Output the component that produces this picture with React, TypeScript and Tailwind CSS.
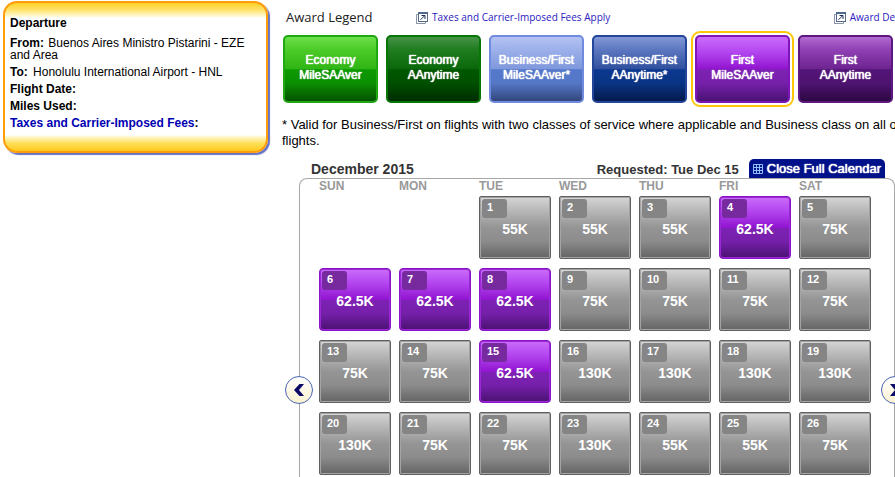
import { clsx } from "clsx";

const WEEKDAYS = ["SUN", "MON", "TUE", "WED", "THU", "FRI", "SAT"];

const LEGEND = [
  {
    cabin: "Economy",
    award: "MileSAAver",
    style:
      "border-[#20a814] bg-[linear-gradient(#6be04a,#4ccb28_20%,#2fb515_50%,#0d9a03_51%,#0b8f02_72%,#045200)]",
  },
  {
    cabin: "Economy",
    award: "AAnytime",
    style:
      "border-[#067606] bg-[linear-gradient(#479447,#1f7c1f_20%,#0a680a_50%,#005800_51%,#005000_72%,#002c00)]",
  },
  {
    cabin: "Business/First",
    award: "MileSAAver*",
    style:
      "border-[#708ade] bg-[linear-gradient(#b4c3f2,#9cb0ea_20%,#7f98dc_50%,#5478cc_51%,#5577c6_72%,#33467c)]",
  },
  {
    cabin: "Business/First",
    award: "AAnytime*",
    style:
      "border-[#24469a] bg-[linear-gradient(#8297d6,#5c77c0_20%,#2f4f9e_50%,#0b3890_51%,#0a3484_72%,#041a4c)]",
  },
  {
    cabin: "First",
    award: "MileSAAver",
    selected: true,
    style:
      "border-[#7d15b8] bg-[linear-gradient(#cb6cfb,#b143ee_25%,#9114cf_50%,#7d22b4_51%,#7620aa_72%,#4a1273)]",
  },
  {
    cabin: "First",
    award: "AAnytime",
    style:
      "border-[#5c1880] bg-[linear-gradient(#b26ad2,#9040b4_20%,#6c2490_50%,#541578_51%,#4e1370_72%,#2c0842)]",
  },
];

type Day = { day: number; miles: string; saver?: boolean };

const WEEKS: (Day | null)[][] = [
  [
    null,
    null,
    { day: 1, miles: "55K" },
    { day: 2, miles: "55K" },
    { day: 3, miles: "55K" },
    { day: 4, miles: "62.5K", saver: true },
    { day: 5, miles: "75K" },
  ],
  [
    { day: 6, miles: "62.5K", saver: true },
    { day: 7, miles: "62.5K", saver: true },
    { day: 8, miles: "62.5K", saver: true },
    { day: 9, miles: "75K" },
    { day: 10, miles: "75K" },
    { day: 11, miles: "75K" },
    { day: 12, miles: "75K" },
  ],
  [
    { day: 13, miles: "75K" },
    { day: 14, miles: "75K" },
    { day: 15, miles: "62.5K", saver: true },
    { day: 16, miles: "130K" },
    { day: 17, miles: "130K" },
    { day: 18, miles: "130K" },
    { day: 19, miles: "130K" },
  ],
  [
    { day: 20, miles: "130K" },
    { day: 21, miles: "75K" },
    { day: 22, miles: "75K" },
    { day: 23, miles: "130K" },
    { day: 24, miles: "55K" },
    { day: 25, miles: "55K" },
    { day: 26, miles: "75K" },
  ],
];

function PopupIcon() {
  return (
    <svg width="12" height="12" viewBox="0 0 12 12" fill="none" className="shrink-0">
      <path d="M2.5 11.5H.5V2.5H2M.5 3v8.500H9.500V9.500" stroke="#8a93a3" />
      <rect x="2.500" y=".5" width="9" height="9" fill="#fff" stroke="#53698c" />
      <path d="M2 1h10" stroke="#53698c" strokeWidth="2" />
      <path d="M4.500 7.800L8.500 3.800M5.500 3.500H9v3.500" stroke="#1c2f5c" />
    </svg>
  );
}

function GridIcon() {
  return (
    <svg width="10" height="10" viewBox="0 0 10 10" fill="none" stroke="#8fc0ff" className="shrink-0">
      <path d="M.5.5h9v9h-9zM3.500 0v10M6.500 0v10M0 3.500h10M0 6.500h10" />
    </svg>
  );
}

function PageArrow({ next = false }: { next?: boolean }) {
  return (
    <button
      type="button"
      aria-label={next ? "Next month" : "Previous month"}
      className={clsx(
        "absolute top-[197px] flex size-7 items-center justify-center rounded-full border border-[#4a64b4] bg-linear-to-b from-white to-[#fbf1cf]",
        next ? "-right-[15px]" : "-left-[15px]",
      )}
    >
      <svg width="12" height="14" viewBox="0 0 12 14" className={clsx(next && "rotate-180")}>
        <path d="M11 1H6.500L1 7l5.500 6H11L6 7z" fill="#0a0a66" />
      </svg>
    </button>
  );
}

function DepartureCard() {
  return (
    <section className="mt-px ml-[3px] flex h-[152px] w-[265px] shrink-0 flex-col gap-[5px] rounded-[14px] border-2 border-[#ff9c0a] bg-[linear-gradient(#ffd027,#ffe36b_7px,#fffbe3_14px,#fff_15px,#fff_132px,#fffbe0_133px,#ffe05a_140px,#ffc91d)] px-[5px] pt-[14px] text-xs leading-3 shadow-[2px_2px_1px_#6672c4]">
      <h2 className="mb-[3px] font-bold">Departure</h2>
      <p>
        <b className="mr-px">From:</b> Buenos Aires Ministro Pistarini - EZE and Area
      </p>
      <p>
        <b className="mr-0.5">To:</b> Honolulu International Airport - HNL
      </p>
      <p className="font-bold">Flight Date:</p>
      <p className="font-bold">Miles Used:</p>
      <p className="font-bold">
        <a href="#fees" className="text-[#0000b3]">
          Taxes and Carrier-Imposed Fees
        </a>
        :
      </p>
    </section>
  );
}

function Legend() {
  return (
    <section>
      <header className="flex h-[35px] items-center pr-2 pl-1 font-['Open_Sans',sans-serif]">
        <h2 className="w-[130px] text-[13px] text-[#222]">Award Legend</h2>
        <a href="#fees" className="flex items-center gap-1 text-[10px] text-[#2a20c0]">
          <PopupIcon />
          Taxes and Carrier-Imposed Fees Apply
        </a>
        <a href="#details" className="ml-auto flex items-center gap-1 text-[10px] text-[#2a20c0]">
          <PopupIcon />
          Award Details
        </a>
      </header>
      <div className="flex gap-2 pl-px">
        {LEGEND.map(({ cabin, award, style, selected }) => (
          <button
            key={cabin + award}
            type="button"
            className={clsx(
              "h-[68px] w-[95px] shrink-0 rounded-[5px] border-2 pb-0.5 text-xs leading-[15px] whitespace-nowrap text-white text-shadow-[0_0_1px_#fff,0_0_1px_#fff]",
              selected && "outline-2 outline-offset-2 outline-[#ffc60a]",
              style,
            )}
          >
            {cabin}
            <br />
            {award}
          </button>
        ))}
      </div>
      <p className="mt-[14px] text-[13px] leading-4">
        * Valid for Business/First on flights with two classes of service where applicable and Business class on all
        other flights.
      </p>
    </section>
  );
}

function DayButton({ day, miles, saver }: Day) {
  return (
    <button
      type="button"
      className={clsx(
        "relative block h-[63px] w-full border pt-0.5 text-sm font-bold text-white",
        saver
          ? "rounded-[4px] border-[#8a12c8] bg-[linear-gradient(#cb6cfb,#b143ee_25%,#9114cf_50%,#7d22b4_51%,#7620aa_72%,#4a1273)] shadow-[inset_0_0_0_1px_#9a28d4]"
          : "rounded-[2px] border-[#606060] bg-[linear-gradient(#d6d6d6,#b4b4b4_25%,#959595_50%,#8c8c8c_72%,#646464)] shadow-[inset_0_0_0_1px_#a4a4a4]",
      )}
    >
      <span
        className={clsx(
          "absolute top-0.5 left-0.5 h-[19px] w-[25px] rounded-[3px] pl-[5px] text-left text-[11px] leading-[17px]",
          saver ? "bg-[#772a9e]" : "bg-[#858585]",
        )}
      >
        {day}
      </span>
      {miles}
    </button>
  );
}

function Calendar() {
  return (
    <section className="mt-[10px] ml-[17px] w-[596px]">
      <header className="flex items-end pr-[10px] pl-3 font-bold text-[#333]">
        <h2 className="text-sm leading-[18px]">December 2015</h2>
        <p className="mr-[10px] ml-auto text-[13px] leading-[17px]">Requested: Tue Dec 15</p>
        <button
          type="button"
          className="flex h-[19px] items-center gap-1 rounded-t-[5px] bg-[#00128a] px-1 text-[13px] font-normal whitespace-nowrap text-white text-shadow-[0_0_1px_#fff,0_0_1px_#fff]"
        >
          <GridIcon />
          Close Full Calendar
        </button>
      </header>
      <div className="relative rounded-t-[8px] border border-b-0 border-[#a8a8a8] pr-[15px] pb-4 pl-[19px]">
        <table className="w-full table-fixed border-collapse">
          <thead>
            <tr>
              {WEEKDAYS.map((name) => (
                <th key={name} scope="col" className="h-[17px] p-0 text-left align-top text-xs leading-[14px] text-[#999]">
                  {name}
                </th>
              ))}
            </tr>
          </thead>
          <tbody>
            {WEEKS.map((week, i) => (
              <tr key={i}>
                {week.map((cell, j) => (
                  <td key={j} className="p-0 pr-2 pb-[9px]">
                    {cell && <DayButton {...cell} />}
                  </td>
                ))}
              </tr>
            ))}
          </tbody>
        </table>
        <PageArrow />
        <PageArrow next />
      </div>
    </section>
  );
}

export default function App() {
  return (
    <div className="flex h-screen items-start gap-[14px] overflow-hidden bg-white font-['Liberation_Sans',Arial,sans-serif] text-black">
      <DepartureCard />
      <main className="min-w-[640px] flex-1">
        <Legend />
        <Calendar />
      </main>
    </div>
  );
}
